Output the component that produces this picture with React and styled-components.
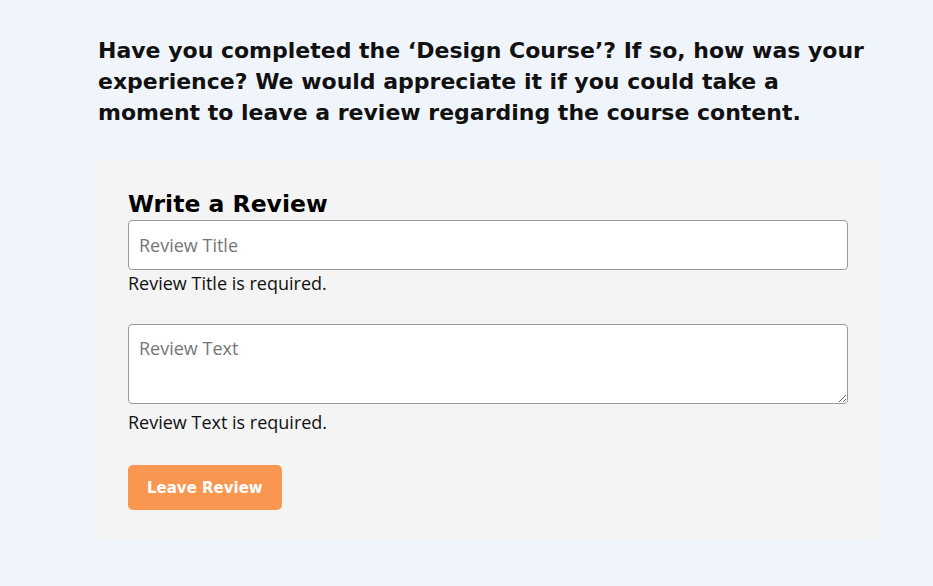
import React from "react";
import styled, { createGlobalStyle } from "styled-components";

const GlobalStyle = createGlobalStyle`
  html, body {
    margin: 0;
    padding: 0;
    background: #f0f4fb;
  }
  * {
    box-sizing: border-box;
  }
`;

const Page = styled.div`
  min-height: 586px;
  padding: 35px 56px 40px 98px;
  font-family: "Open Sans", "Liberation Sans", sans-serif;
  color: #111;
`;

const Intro = styled.h2`
  margin: 0;
  font-family: "DejaVu Sans", "Liberation Sans", sans-serif;
  font-weight: 700;
  font-size: 22px;
  line-height: 31px;
  color: #111;
`;

const Panel = styled.div`
  margin-top: 32px;
  background: #f4f4f4;
  border-radius: 4px;
  padding: 29px 29px 29px 30px;
`;

const FormTitle = styled.h3`
  margin: 0;
  font-family: "DejaVu Sans", "Liberation Sans", sans-serif;
  font-weight: 800;
  font-size: 23.5px;
  line-height: 31px;
  color: #000;
`;

const Field = styled.div`
  margin-bottom: ${(props) => props.gap || "0"};
`;

const Input = styled.input`
  display: block;
  width: 100%;
  height: 50px;
  padding: 0 10px;
  border: 1px solid #9b9b9b;
  border-radius: 4px;
  background: #fff;
  font-family: "Open Sans", sans-serif;
  font-size: 18px;
  color: #222;
  outline: none;
  &::placeholder {
    color: #767676;
  }
`;

const TextArea = styled.textarea`
  display: block;
  width: 100%;
  height: 80px;
  padding: 11px 10px;
  border: 1px solid #9b9b9b;
  border-radius: 4px;
  background: #fff;
  font-family: "Open Sans", sans-serif;
  font-size: 18px;
  color: #222;
  outline: none;
  resize: vertical;
  &::placeholder {
    color: #767676;
  }
`;

const ErrorText = styled.p`
  margin: ${(props) => props.top || "0"} 0 0;
  font-size: 18px;
  line-height: 26px;
  color: #111;
`;

const Button = styled.button`
  margin-top: 30px;
  height: 45px;
  padding: 0 19px;
  border: none;
  border-radius: 5px;
  background: #f99750;
  color: #fff;
  font-family: "DejaVu Sans", "Liberation Sans", sans-serif;
  font-weight: 700;
  font-size: 15px;
  cursor: pointer;
`;

const App = () => {
  return (
    <>
      <GlobalStyle />
      <Page>
        <Intro>
          Have you completed the ‘Design Course’? If so, how was your
          experience? We would appreciate it if you could take a moment to
          leave a review regarding the course content.
        </Intro>
        <Panel>
          <FormTitle>Write a Review</FormTitle>
          <Field gap="28px">
            <Input placeholder="Review Title" />
            <ErrorText>Review Title is required.</ErrorText>
          </Field>
          <Field>
            <TextArea placeholder="Review Text" />
            <ErrorText top="5px">Review Text is required.</ErrorText>
          </Field>
          <Button>Leave Review</Button>
        </Panel>
      </Page>
    </>
  );
};

export default App;
